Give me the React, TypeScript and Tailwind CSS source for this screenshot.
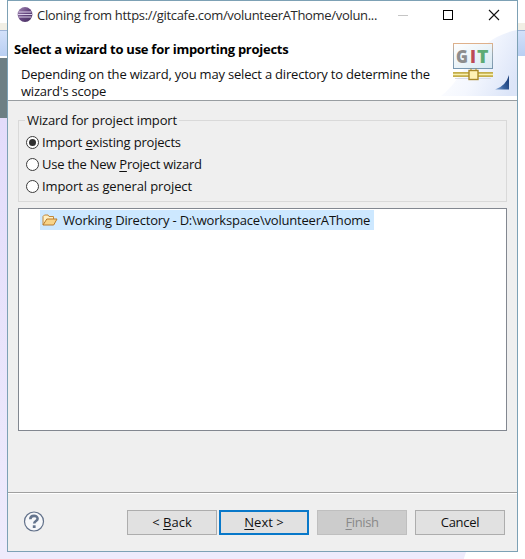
import React from "react";

const U = ({ children }: { children: React.ReactNode }) => (
  <span className="underline decoration-1 underline-offset-2">{children}</span>
);

function EclipseIcon() {
  return (
    <svg className="shrink-0" width="16" height="16" viewBox="0 0 16 16">
      <defs>
        <linearGradient id="ecl" x1="0" y1="0" x2="1" y2="1">
          <stop offset="0" stopColor="#a58cb5" />
          <stop offset="0.5" stopColor="#65457f" />
          <stop offset="1" stopColor="#45305f" />
        </linearGradient>
      </defs>
      <circle cx="8" cy="7.5" r="7.4" fill="url(#ecl)" />
      <path d="M1.5 5h13M1 7.5h14M1.5 10h13" stroke="#d9cde8" strokeWidth="1.1" />
    </svg>
  );
}

function HeaderArt() {
  return (
    <svg width="76" height="75" viewBox="0 0 76 75">
      <defs>
        <linearGradient id="haze" x1="0" y1="0.3" x2="1" y2="0.7">
          <stop offset="0" stopColor="#ffffff" />
          <stop offset="0.5" stopColor="#f4f7fe" />
          <stop offset="1" stopColor="#dce5f8" />
        </linearGradient>
        <linearGradient id="board" x1="0" y1="0" x2="1" y2="1">
          <stop offset="0" stopColor="#ffffff" />
          <stop offset="1" stopColor="#d7e8f2" />
        </linearGradient>
        <linearGradient id="frame" x1="0" y1="0" x2="0" y2="1">
          <stop offset="0" stopColor="#dfb18b" />
          <stop offset="0.4" stopColor="#9aa9b2" />
          <stop offset="1" stopColor="#7897b0" />
        </linearGradient>
        <linearGradient id="corner" x1="0" y1="1" x2="1" y2="0.5">
          <stop offset="0" stopColor="#8eb0dc" />
          <stop offset="0.55" stopColor="#3a639f" />
          <stop offset="1" stopColor="#1f437e" />
        </linearGradient>
      </defs>
      <path d="M0 71C25 52 31 14 76 5V71Z" fill="url(#haze)" />
      <rect x="12.5" y="18.5" width="39" height="25" fill="url(#board)" stroke="url(#frame)" />
      <g fontSize="17.5" fontWeight="800" fontFamily="'Open Sans', sans-serif">
        <text x="15" y="37.5" fill="#8d8d8d" textLength="12" lengthAdjust="spacingAndGlyphs">G</text>
        <text x="29" y="37.5" fill="#bd4a55" textLength="6" lengthAdjust="spacingAndGlyphs">I</text>
        <text x="36" y="37.5" fill="#5dab75" textLength="11.5" lengthAdjust="spacingAndGlyphs">T</text>
      </g>
      <rect x="12" y="47" width="40" height="5" fill="#c4ae4a" />
      <path d="M12 49.5h40" stroke="#f7f0ae" strokeWidth="1.6" />
      <path d="M14 53.5h36" stroke="#d8dce4" />
      <path d="M30 43.5v2h5v-2" fill="none" stroke="#ad8d2a" />
      <rect x="28" y="45.5" width="9" height="9" fill="#fff2b5" stroke="#a98929" strokeWidth="1.4" />
      <path d="M54 64.5Q65 61 68 50V64.5Z" fill="url(#corner)" />
    </svg>
  );
}

function FolderIcon() {
  return (
    <svg className="shrink-0" width="16" height="14" viewBox="0 0 16 14">
      <path d="M1 12V3.5L2.5 2H6l1 1.5h4.5V6" fill="#fff0c4" stroke="#c2883b" />
      <path d="M1 12L4.8 6H15l-3.3 6Z" fill="#f8d488" stroke="#b87b2c" strokeLinejoin="round" />
    </svg>
  );
}

function Radio({ checked, children, gap }: { checked?: boolean; children: React.ReactNode; gap: string }) {
  return (
    <div className="flex h-[22px] items-center">
      <span className="mr-[3px] flex size-[13px] items-center justify-center rounded-full border border-[#3b3b3b] bg-white">
        {checked && <span className="size-[7px] rounded-full bg-[#303030]" />}
      </span>
      <span className={gap}>{children}</span>
    </div>
  );
}

export default function App() {
  return (
    <div className="relative h-[559px] w-[525px] overflow-hidden bg-white font-['Open_Sans','Noto_Sans',sans-serif] text-[13px] leading-[17px] whitespace-nowrap text-[#111]">
      <div className="absolute inset-0 flex flex-col">
        <div className="h-[23px]" />
        <div className="h-[7px] bg-[#f1efe5]" />
        <div className="h-[26px] border-t border-[#9fb5d8] bg-linear-to-b from-[#d3e1fa] to-[#b9cff2]" />
        <div className="h-[2px] bg-white" />
        <div className="flex h-[60px]">
          <div className="w-2 bg-[#6d7f84]" />
        </div>
        <div className="flex flex-1">
          <div className="w-2 bg-linear-to-b from-[#e3dcfb] to-[#eeebfc]" />
        </div>
        <div className="h-[10px] w-[467px] bg-[#eeebfc] [clip-path:polygon(0_0,100%_0,99.3%_100%,0_100%)]" />
      </div>

      <div className="relative ml-[7px] flex h-[552px] w-[511px] flex-col border border-[#7da1b5] bg-[#efefef]">
        <header className="relative h-[100px] shrink-0 border-b border-[#989da1] bg-white">
          <div className="absolute right-0 bottom-0 h-[75px]"><HeaderArt /></div>
          <div className="relative flex h-[28px] items-center pl-[9px]">
            <EclipseIcon />
            <span className="ml-1 w-[342px] shrink-0 tracking-[-0.31px] text-[#292929]">Cloning from https://gitcafe.com/volunteerAThome/volun...</span>
            <svg className="ml-[18px] shrink-0" width="104" height="14" viewBox="0 0 104 14">
              <path d="M1 7.5h10" stroke="#c5c5c5" />
              <rect x="46.5" y="2.5" width="9" height="9" fill="none" stroke="#000" />
              <path d="M92 2l10 10M102 2L92 12" stroke="#111" strokeWidth="1.1" />
            </svg>
          </div>
          <h1 className="relative mt-[12px] ml-[6px] text-[13px] leading-[17px] font-bold tracking-[-0.26px] text-black">Select a wizard to use for importing projects</h1>
          <p className="relative mt-[8px] ml-[13px] tracking-[-0.2px]">Depending on the wizard, you may select a directory to determine the<br />wizard's scope</p>
        </header>

        <fieldset className="relative mx-[10px] mt-[19px] h-[82px] shrink-0 border border-[#d9d9d9] pt-[10px] pl-[7px]">
          <div className="absolute top-[-9px] left-[6px] bg-[#efefef] px-[2px] tracking-[-0.12px]">Wizard for project import</div>
          <Radio checked gap="tracking-[-0.19px]">Import <U>e</U>xisting projects</Radio>
          <Radio gap="tracking-[-0.24px]">Use the New <U>P</U>roject wizard</Radio>
          <Radio gap="tracking-[-0.12px]">Import as <U>g</U>eneral project</Radio>
        </fieldset>

        <section className="mx-[10px] mt-[6px] h-[223px] shrink-0 border border-[#828790] bg-white pt-px pl-[21px]">
          <div className="flex h-[20px] w-[334px] items-center bg-[#cde8ff] pl-[2px]">
            <FolderIcon />
            <span className="ml-[5px] tracking-[-0.19px]">Working Directory - D:\workspace\volunteerAThome</span>
          </div>
        </section>

        <footer className="mt-[61px] flex h-[59px] border-t border-[#a0a0a0] pt-[17px] pl-[15px] shadow-[inset_0_1px_0_white]">
          <svg className="mt-px shrink-0" width="22" height="22" viewBox="0 0 22 22">
            <circle cx="11" cy="10.5" r="9.5" fill="#f7f8fa" stroke="#62718a" strokeWidth="1.2" />
            <path d="M7.3 8.2C7.3 3.8 14.6 3.8 14.6 7.7C14.6 10.1 11.2 9.9 11.2 12.6" fill="none" stroke="#64748d" strokeWidth="2.6" />
            <rect x="9.8" y="14.3" width="2.8" height="2.7" fill="#64748d" />
          </svg>
          <button className="ml-[82px] h-[25px] w-[90px] border border-[#adadad] bg-[#e1e1e1]">&lt; <U>B</U>ack</button>
          <button className="ml-[2px] h-[25px] w-[90px] border-2 border-[#0878c9] bg-[#e1e1e1]"><U>N</U>ext &gt;</button>
          <button className="ml-[8px] h-[25px] w-[90px] border border-[#bfbfbf] bg-[#cccccc] tracking-[-0.4px] text-[#898989]"><U>F</U>inish</button>
          <button className="ml-[8px] h-[25px] w-[90px] border border-[#adadad] bg-[#e1e1e1] tracking-[-0.3px]">Cancel</button>
        </footer>
      </div>
    </div>
  );
}
